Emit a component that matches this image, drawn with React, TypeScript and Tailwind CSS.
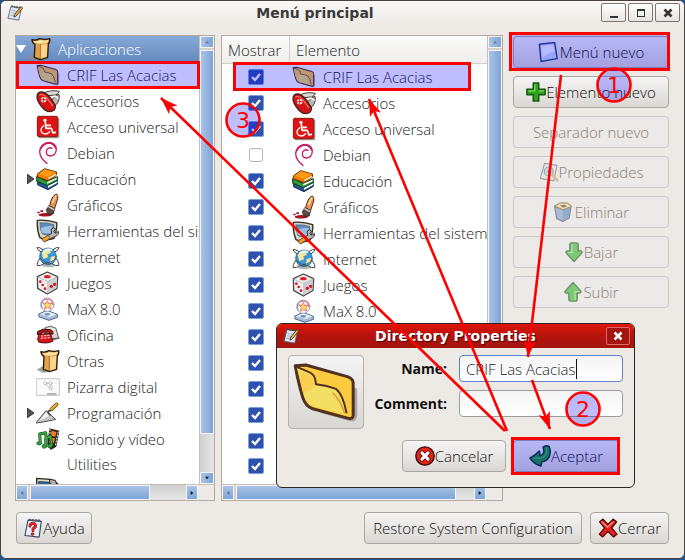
import type { ReactNode } from "react";

type IconProps = { size?: string; className?: string };

function Art({ size = "size-6", className = "", children }: IconProps & { children: ReactNode }) {
  return (
    <svg viewBox="0 0 72 72" aria-hidden="true" className={`shrink-0 ${size} ${className}`} strokeLinejoin="round" strokeLinecap="round">
      {children}
    </svg>
  );
}

const Bag = (p: IconProps) => (
  <Art {...p}>
    <path d="M2 62 L22 50 L26 66 L44 68 L20 71Z" fill="#8b8b8b" opacity=".8" />
    <path d="M15 8 Q26 12 38 5 Q54 9 68 5 Q70 16 64 20 L62 61 L40 68 L22 61 L24 22 Q14 16 15 8Z" fill="#e3a24d" stroke="#26170a" strokeWidth="4" />
    <path d="M41 24 L61 20 L59 59 L41 65Z" fill="#ffd48a" />
    <path d="M20 11 Q30 15 40 9 Q52 13 64 9 L62 16 L42 20 L24 18Z" fill="#ffe6ae" />
    <path d="M40 22 V66" stroke="#8a5418" strokeWidth="2" />
  </Art>
);

const Folder = ({ size = "size-6" }: IconProps) => (
  <svg viewBox="216 158 204 190" aria-hidden="true" className={`shrink-0 ${size}`} strokeLinejoin="round">
    <path d="M392 232 L412 242 V322 Q410 342 390 340 L300 314Z" fill="#8f8f8f" opacity=".7" />
    <path d="M225 172 L257 170 L385 206 Q400 212 400 226 V322 Q399 333 386 331 L278 302 Q256 294 248 268 Q236 230 225 172Z" fill="#fccb3f" stroke="#50301e" strokeWidth="9" />
    <path d="M231 180 L262 194 Q280 200 284 212 L287 228 Q320 234 346 242 Q372 262 382 320 L280 295 Q260 288 252 264Z" fill="#f2de62" />
    <path d="M236 186 L264 198 Q276 202 280 214 L284 232 Q270 250 248 252Z" fill="#fdc84a" opacity=".7" />
    <path d="M226 174 L264 190 Q282 197 285 212 L288 228 Q322 232 348 242 Q370 260 380 316" fill="none" stroke="#50301e" strokeWidth="6" />
    <path d="M338 254 Q362 276 374 316" fill="none" stroke="#e08f2c" strokeWidth="4" />
  </svg>
);

const Knife = (p: IconProps) => (
  <Art {...p}>
    <path d="M20 13 Q44 1 70 7 Q68 15 58 18 L34 20Z" fill="#d8d8d4" stroke="#4f3c30" strokeWidth="3" />
    <path d="M44 40 Q50 22 69 16 Q74 40 52 54Z" fill="#b9b6ae" stroke="#4f3c30" strokeWidth="3" />
    <path d="M50 24 Q60 18 66 28" fill="none" stroke="#fff" strokeWidth="4" />
    <path d="M3 22 Q5 8 18 9 Q32 12 44 28 L58 50 Q60 66 42 68 Q28 68 16 52 Q3 36 3 22Z" fill="#d41414" stroke="#43201c" strokeWidth="4" />
    <path d="M11 18 Q20 12 32 26 L50 50" fill="none" stroke="#ff6d61" strokeWidth="4" />
    <circle cx="23" cy="32" r="8" fill="#fff" />
    <path d="M23 26 V38 M17 32 H29" stroke="#d41414" strokeWidth="3" />
  </Art>
);

const Access = (p: IconProps) => (
  <Art {...p}>
    <rect x="8" y="8" width="62" height="62" rx="4" fill="#a09c98" />
    <rect x="4" y="4" width="61" height="61" rx="5" fill="#e01212" stroke="#8a1a14" strokeWidth="3" />
    <circle cx="27" cy="16" r="5" fill="#fff" />
    <path d="M28 22 L30 40 H46 L51 54 L58 52 M30 31 H43" fill="none" stroke="#fff" strokeWidth="5" />
    <path d="M23 32 Q10 42 18 53 Q29 62 41 50" fill="none" stroke="#fff" strokeWidth="4" />
  </Art>
);

const Debian = (p: IconProps) => (
  <Art {...p}>
    <path d="M33 67 Q11 52 11 31 Q15 8 38 5 Q60 6 61 25 Q60 44 43 45 Q27 43 32 27 Q38 17 48 22" fill="none" stroke="#c6205f" strokeWidth="4" />
    <path d="M14 22 Q22 6 40 5 Q54 7 59 20" fill="none" stroke="#c6205f" strokeWidth="6" />
  </Art>
);

const Books = (p: IconProps) => (
  <Art {...p}>
    <path d="M6 42 L36 56 L64 40 V52 L36 68 L6 54Z" fill="#2158a5" stroke="#16243c" strokeWidth="3" />
    <path d="M36 56 L64 42 V47 L36 63Z" fill="#fff" />
    <path d="M3 29 L34 43 L64 29 V40 L34 56 L3 43Z" fill="#279b34" stroke="#123a18" strokeWidth="3" />
    <path d="M34 44 L62 32 V37 L34 50Z" fill="#fff" />
    <path d="M5 20 L26 5 L62 15 L60 26 L36 41 L5 30Z" fill="#ef7d00" stroke="#633204" strokeWidth="3" />
    <path d="M37 32 L60 20 V25 L37 37Z" fill="#fff5dc" />
    <path d="M8 20 L27 7 L60 16 L36 29Z" fill="#ff9a14" />
  </Art>
);

const Brush = (p: IconProps) => (
  <Art {...p}>
    <path d="M4 56 h7 v5 h-7z M13 52 h8 v5 h-8z M8 64 Q26 58 38 61 L50 66 Q32 74 10 68Z" fill="#a31120" />
    <path d="M32 48 L44 38 L55 46 L52 62 Q42 68 35 61Z" fill="#5d4a42" stroke="#2b2320" strokeWidth="3" />
    <path d="M41 38 Q46 10 60 3 Q67 4 65 18 L56 46Z" fill="#e99350" stroke="#563117" strokeWidth="3" />
    <path d="M50 28 L59 9" stroke="#ffd4a0" strokeWidth="5" />
    <path d="M39 38 L57 47 L54 54 L36 44Z" fill="#cbc4bd" stroke="#463a34" strokeWidth="2" />
  </Art>
);

const Tools = (p: IconProps) => (
  <Art {...p}>
    <path d="M4 4 Q34 1 62 11 Q64 30 54 58 Q30 66 12 56 Q2 34 4 4Z" fill="#dcd6c0" stroke="#312b25" strokeWidth="4" />
    <path d="M12 12 Q34 9 54 17 Q54 32 46 48 Q28 50 18 44 Q11 30 12 12Z" fill="#5b8bb8" stroke="#46607c" strokeWidth="2" />
    <path d="M14 28 Q32 18 50 22 Q48 34 44 44 L18 42Z" fill="#9cc0e2" />
    <path d="M46 30 Q54 22 59 30 L53 38 L60 43 L67 37 Q69 49 58 52 L26 68 L18 60 L46 44Z" fill="#b9b8b6" stroke="#3b332e" strokeWidth="3" />
    <path d="M18 60 L36 49 L42 57 L25 69Z" fill="#ef9e31" stroke="#7a4810" strokeWidth="2" />
  </Art>
);

const Globe = (p: IconProps) => (
  <Art {...p}>
    <ellipse cx="38" cy="62" rx="20" ry="5" fill="#b4b4b4" />
    <circle cx="36" cy="34" r="25" fill="#3d97d6" stroke="#1d4a72" strokeWidth="2" />
    <path d="M17 24 Q28 8 42 13 L44 25 L34 27 L36 37 L22 42Z M44 36 L57 32 L55 45 L42 55Z" fill="#f7e6a0" />
    <path d="M24 18 Q34 9 46 15" fill="none" stroke="#e5f8ff" strokeWidth="6" />
    <path d="M14 20 Q2 12 3 8 Q8 5 20 13 M58 20 Q70 12 69 8 Q64 5 52 13 M12 40 Q1 54 4 62 Q12 64 24 56 M60 40 Q71 54 68 62 Q60 64 48 56" fill="none" stroke="#383e43" strokeWidth="3" />
    <path d="M12 40 Q26 54 48 56 M60 40 Q46 54 24 56" fill="none" stroke="#383e43" strokeWidth="2" />
  </Art>
);

const Die = (p: IconProps) => (
  <Art {...p}>
    <path d="M34 3 L65 17 L63 52 L34 69 L5 52 L4 17Z" fill="#f0eff0" stroke="#48474d" strokeWidth="4" />
    <path d="M36 31 L63 18 L61 51 L36 66Z" fill="#ceced3" />
    <path d="M5 18 L35 31 L64 18 M35 31 V67" fill="none" stroke="#aaa" strokeWidth="2" />
    <ellipse cx="34" cy="17" rx="10" ry="5" fill="#d81d25" />
    <g fill="#cf1820"><circle cx="13" cy="32" r="4" /><circle cx="20" cy="42" r="4" /><circle cx="27" cy="53" r="4" /><circle cx="46" cy="46" r="5" /><circle cx="56" cy="40" r="5" /></g>
  </Art>
);

const Max = (p: IconProps) => (
  <Art {...p}>
    <path d="M9 51 L33 40 L64 52 V61 L39 70 L10 60Z" fill="#a9bed5" stroke="#45658d" strokeWidth="3" />
    <path d="M12 51 L34 43 L61 52 L39 60Z" fill="#eaf2fb" />
    <circle cx="34" cy="23" r="20" fill="#faf7fb" stroke="#aaa6ba" strokeWidth="3" />
    <path d="M18 32 Q10 12 29 6" fill="none" stroke="#668bd8" strokeWidth="3" />
    <path d="M27 7 Q49 2 51 24" fill="none" stroke="#ec5a62" strokeWidth="3" />
    <path d="M20 17 L30 20 L34 11 L38 20 L48 18 L41 27 L45 36 L34 31 L25 37 L28 27Z" fill="#ffe066" stroke="#d94c44" strokeWidth="2" />
    <ellipse cx="34" cy="52" rx="9" ry="4" fill="#7594bb" />
  </Art>
);

const Phone = (p: IconProps) => (
  <Art {...p}>
    <path d="M28 14 L44 9 L60 16 L68 46 L46 52 L30 36Z" fill="#d7d5d1" stroke="#676560" strokeWidth="3" />
    <path d="M34 18 L55 19 M39 27 L58 29" stroke="#fff" strokeWidth="4" />
    <path d="M6 25 Q22 14 44 20 Q54 25 51 33 L42 33 L39 27 L17 28 L15 34 L5 35Z" fill="#b81416" stroke="#390c0b" strokeWidth="3" />
    <path d="M11 34 L43 31 L51 54 Q34 64 8 57 L5 48Z" fill="#d61518" stroke="#4b0d0b" strokeWidth="3" />
    <path d="M17 39 h4 M26 38 h4 M35 37 h4 M16 46 h4 M26 45 h4 M36 44 h4" stroke="#fff" strokeWidth="3" />
    <path d="M50 47 L70 45" stroke="#555" strokeWidth="3" />
  </Art>
);

const Board = (p: IconProps) => (
  <Art {...p}>
    <rect x="2" y="11" width="68" height="50" fill="#fafafa" stroke="#c6c6c6" strokeWidth="3" />
    <g fill="none" stroke="#aaa" strokeWidth="2"><circle cx="28" cy="25" r="5" /><circle cx="44" cy="25" r="5" /><circle cx="44" cy="40" r="5" /><path d="M33 25 H39 M44 30 V35 M31 29 L40 37" /></g>
    <path d="M34 57 H60" stroke="#777" strokeWidth="3" />
  </Art>
);

const Trowel = (p: IconProps) => (
  <Art {...p}>
    <path d="M2 63 L30 29 L59 55 Q30 62 2 66Z" fill="#cbc7ca" stroke="#4f4b50" strokeWidth="3" />
    <path d="M11 58 L31 34 L40 44Z" fill="#f6f5f6" />
    <path d="M42 42 Q30 31 42 29 L47 24" fill="none" stroke="#45413c" strokeWidth="5" />
    <path d="M46 25 L62 10" stroke="#704511" strokeWidth="11" />
    <path d="M46 25 L62 10" stroke="#f3b341" strokeWidth="6" />
  </Art>
);

const Media = (p: IconProps) => (
  <Art {...p}>
    <path d="M40 4 L70 11 L61 59 L44 69 L34 51Z" fill="#29231e" />
    <path d="M47 11 L61 15 L58 29 L44 26Z M43 32 L57 34 L54 47 L42 49Z" fill="#ff7d19" />
    <path d="M42 7 V57 M66 15 L58 58" stroke="#fff" strokeWidth="3" strokeDasharray="3 6" />
    <path d="M13 48 L11 21 L29 17 L31 39 M30 55 L29 35 L44 27 L47 54" fill="none" stroke="#174a18" strokeWidth="9" />
    <g fill="#29a338" stroke="#174a18" strokeWidth="2"><ellipse cx="9" cy="49" rx="7" ry="5" /><ellipse cx="25" cy="58" rx="7" ry="6" /><ellipse cx="42" cy="57" rx="7" ry="6" /></g>
    <path d="M13 48 L11 21 L29 17 L31 39 M30 55 L29 35 L44 27 L47 54" fill="none" stroke="#36b044" strokeWidth="5" />
  </Art>
);

const Admin = (p: IconProps) => (
  <Art {...p}>
    <path d="M2 4 L42 7 L65 20 L64 54 L10 60 L2 42Z" fill="#ddd8c7" stroke="#28251f" strokeWidth="4" />
    <path d="M9 14 L41 16 L39 42 L12 40Z" fill="#246cab" stroke="#203953" strokeWidth="3" />
    <path d="M42 7 L58 10 L63 24 L50 27 L42 17Z" fill="#b1ada3" stroke="#28251f" strokeWidth="3" />
  </Art>
);

const Notepad = ({ size = "size-4", className = "" }: IconProps) => (
  <Art size={size} className={className}>
    <path d="M19 8 L65 15 L53 68 L6 60Z" fill="#dce6f4" stroke="#59636f" strokeWidth="4" />
    <path d="M20 5 L61 12" stroke="#444" strokeWidth="6" strokeDasharray="4 8" />
    <path d="M22 25 L49 29 M19 35 L41 39 M17 46 L37 49" stroke="#8998b1" strokeWidth="3" />
    <path d="M64 8 L70 14 L40 51 L31 54 L34 44Z" fill="#f2ba43" stroke="#483519" strokeWidth="4" />
  </Art>
);

const Help = (p: IconProps) => (
  <Art {...p}>
    <path d="M18 8 L66 12 L58 69 L7 63Z" fill="#e6eefb" stroke="#33465d" strokeWidth="4" />
    <path d="M23 7 L62 10" stroke="#4c596b" strokeWidth="8" strokeDasharray="3 8" />
    <path d="M25 29 Q26 19 37 19 Q48 22 44 32 L36 39 L36 46" fill="none" stroke="#641415" strokeWidth="10" />
    <path d="M25 29 Q26 19 37 19 Q48 22 44 32 L36 39 L36 46" fill="none" stroke="#ef2020" strokeWidth="7" />
    <circle cx="34" cy="58" r="5" fill="#ef2020" stroke="#641415" strokeWidth="2" />
  </Art>
);

const Sheet = (p: IconProps) => (
  <Art {...p}>
    <path d="M5 8 L60 2 L69 60 L11 70Z" fill="#c9deff" stroke="#24456f" strokeWidth="5" />
    <path d="M12 14 L54 9 L59 34 Q32 38 16 58Z" fill="#f5faff" />
  </Art>
);

const Plus = (p: IconProps) => (
  <Art {...p}>
    <path d="M26 3 H46 V26 H69 V46 H46 V69 H26 V46 H3 V26 H26Z" fill="#2fa31e" stroke="#145511" strokeWidth="5" />
    <path d="M32 10 V32 H10 M50 32 H62" fill="none" stroke="#85db68" strokeWidth="4" />
  </Art>
);

const Props = (p: IconProps) => (
  <Art {...p}>
    <path d="M20 5 L65 12 L53 68 L5 59Z" fill="#e1e8ef" stroke="#4d5965" strokeWidth="4" />
    <circle cx="35" cy="34" r="16" fill="#b8cbdb" stroke="#555" strokeWidth="4" />
    <circle cx="35" cy="34" r="6" fill="#506c82" />
    <path d="M48 47 L65 65" stroke="#c39463" strokeWidth="11" />
  </Art>
);

const Bin = (p: IconProps) => (
  <Art {...p}>
    <path d="M6 16 L35 28 L65 16 L58 58 L35 70 L13 59Z" fill="#7a9fce" stroke="#3f4856" strokeWidth="4" />
    <path d="M35 29 L62 19 L56 57 L35 67Z" fill="#5683bf" />
    <path d="M5 14 L28 3 L53 4 L67 16 L36 28Z" fill="#f5da8f" stroke="#765f34" strokeWidth="4" />
    <path d="M25 13 L42 9 L50 16 L36 21Z" fill="#4e4837" />
  </Art>
);

const Down = ({ size, className = "" }: IconProps) => (
  <Art size={size} className={className}>
    <path d="M25 3 H45 Q51 3 51 9 V32 H60 Q68 34 63 41 L36 70 L9 41 Q4 34 12 32 H21 V9 Q21 3 25 3Z" fill="#38b22c" stroke="#1c5518" strokeWidth="5" />
    <path d="M29 10 V38 H17" fill="none" stroke="#9be58d" strokeWidth="4" />
  </Art>
);

const Cancel = (p: IconProps) => (
  <Art {...p}>
    <circle cx="36" cy="36" r="33" fill="#e32219" stroke="#3b0a08" strokeWidth="5" />
    <path d="M25 25 L47 47 M47 25 L25 47" stroke="#4c0c09" strokeWidth="17" />
    <path d="M25 25 L47 47 M47 25 L25 47" stroke="#fff" strokeWidth="11" />
  </Art>
);

const Accept = (p: IconProps) => (
  <Art {...p}>
    <path d="M46 7 Q58 0 66 5 Q73 22 66 40 Q58 53 42 55 L39 69 Q16 62 3 43 Q20 34 34 20 L36 35 Q54 32 46 7Z" fill="#1a9c33" stroke="#0c3a24" strokeWidth="5" />
    <path d="M57 10 Q62 38 38 43 L16 43" fill="none" stroke="#54b860" strokeWidth="4" />
  </Art>
);

const CloseX = (p: IconProps) => (
  <Art {...p}>
    <path d="M6 14 L18 4 L36 23 L54 4 L67 14 L49 36 L68 58 L56 68 L36 48 L17 68 L5 58 L24 36Z" fill="#ee1d1b" stroke="#590c09" strokeWidth="5" />
    <path d="M14 14 L34 33 L54 14" fill="none" stroke="#ff8b7e" strokeWidth="5" />
  </Art>
);

type Entry = { name: string; icon?: (p: IconProps) => ReactNode; expandable?: boolean; hidden?: boolean };

const entries: Entry[] = [
  { name: "CRIF Las Acacias", icon: Folder },
  { name: "Accesorios", icon: Knife },
  { name: "Acceso universal", icon: Access },
  { name: "Debian", icon: Debian, hidden: true },
  { name: "Educación", icon: Books, expandable: true },
  { name: "Gráficos", icon: Brush },
  { name: "Herramientas del sistema", icon: Tools },
  { name: "Internet", icon: Globe },
  { name: "Juegos", icon: Die },
  { name: "MaX 8.0", icon: Max },
  { name: "Oficina", icon: Phone },
  { name: "Otras", icon: Bag },
  { name: "Pizarra digital", icon: Board },
  { name: "Programación", icon: Trowel, expandable: true },
  { name: "Sonido y vídeo", icon: Media },
  { name: "Utilities" },
];

function rowHeight(e: Entry) {
  return e.icon ? "h-[26px]" : "h-6";
}

function Tip({ dir, faint }: { dir: "up" | "down" | "left" | "right"; faint?: boolean }) {
  const d = { up: "M0 5 L3 1 L6 5Z", down: "M0 1 L3 5 L6 1Z", left: "M5 0 L1 3 L5 6Z", right: "M1 0 L5 3 L1 6Z" }[dir];
  return (
    <svg viewBox="0 0 6 6" className="size-1" aria-hidden="true">
      <path d={d} fill={faint ? "#6f7478" : "#111"} />
    </svg>
  );
}

const blueV = "rounded-[1px] border border-[#f4f8fd] bg-linear-to-r from-[#a9c4e6] to-[#7fa4d6]";
const blueH = "rounded-[1px] border border-[#f4f8fd] bg-linear-to-b from-[#a9c4e6] to-[#7fa4d6]";

function VScroll({ thumb }: { thumb: string }) {
  return (
    <div className="flex w-[15px] shrink-0 flex-col border-l border-[#c9beb5] bg-[#dadada]">
      <button aria-label="Arriba" className={`flex h-3 items-center justify-center ${blueV}`}><Tip dir="up" faint /></button>
      <div className="h-0.5 bg-[#d8cfc8]" />
      <div className={`${thumb} ${blueV}`} />
      <div className="flex-1 bg-linear-to-r from-[#cfcfcf] to-[#e6e6e6]" />
      <button aria-label="Abajo" className={`flex h-3 items-center justify-center ${blueV}`}><Tip dir="down" /></button>
    </div>
  );
}

function HScroll({ thumb }: { thumb: string }) {
  return (
    <div className="flex h-4 shrink-0 border-t border-[#c9beb5] pr-4">
      <button aria-label="Izquierda" className={`flex w-3 items-center justify-center ${blueH}`}><Tip dir="left" faint /></button>
      <div className="w-0.5 bg-[#d8cfc8]" />
      <div className={`${thumb} ${blueH}`} />
      <div className="flex-1 bg-linear-to-b from-[#cfcfcf] to-[#e6e6e6]" />
      <button aria-label="Derecha" className={`flex w-3 items-center justify-center ${blueH}`}><Tip dir="right" /></button>
    </div>
  );
}

function Expander({ open }: { open?: boolean }) {
  return open ? (
    <svg viewBox="0 0 10 8" className="h-2 w-2.5" aria-hidden="true"><path d="M0 0 H10 L5 8Z" fill="#fff" /></svg>
  ) : (
    <svg viewBox="0 0 7 10" className="h-2.5 w-[7px]" aria-hidden="true"><path d="M0 0 L7 5 L0 10Z" fill="#555" stroke="#333" /></svg>
  );
}

function Tree() {
  return (
    <section className="flex w-[200px] shrink-0 flex-col border border-[#b5aaa0] bg-[#edeae6]">
      <div className="flex min-h-0 flex-1">
        <ul className="min-w-0 flex-1 overflow-hidden bg-white text-[#222]">
          <li className="flex h-[26px] items-center bg-linear-to-b from-[#86a9d8] to-[#6489bd] text-white">
            <span className="w-[11px]"><Expander open /></span>
            <Bag />
            <span className="ml-[7px]">Aplicaciones</span>
          </li>
          {entries.map((e) => (
            <li key={e.name} className={`flex items-center pl-[11px] whitespace-nowrap ${rowHeight(e)}`}>
              <span className="w-[9px] shrink-0">{e.expandable && <Expander />}</span>
              {e.icon ? <e.icon /> : <span className="w-6" />}
              <span className="ml-[7px]">{e.name}</span>
            </li>
          ))}
          <li className="flex h-[26px] items-center pl-5">
            <Admin />
            <span className="ml-[7px]">Administración</span>
          </li>
        </ul>
        <VScroll thumb="h-[384px]" />
      </div>
      <HScroll thumb="w-[120px]" />
    </section>
  );
}

function Tick({ name, on }: { name: string; on: boolean }) {
  return (
    <label className="grid size-4 place-items-center">
      <input
        type="checkbox"
        aria-label={`Mostrar ${name}`}
        defaultChecked={on}
        className="peer col-start-1 row-start-1 size-3.5 appearance-none rounded-[3px] border border-[#b4b4b4] bg-white checked:size-4 checked:rounded-[2px] checked:border checked:border-[#7ba2d8] checked:bg-[#2f50ad]"
      />
      <svg viewBox="0 0 16 16" className="pointer-events-none col-start-1 row-start-1 hidden size-4 peer-checked:block" aria-hidden="true">
        <path d="M4 8 L7 11 L12 5" fill="none" stroke="#fff" strokeWidth="2.4" />
      </svg>
    </label>
  );
}

function List() {
  return (
    <section className="flex min-w-0 flex-1 flex-col border border-[#b5aaa0] bg-[#edeae6]">
      <div className="flex min-h-0 flex-1">
        <div className="min-w-0 flex-1 overflow-hidden bg-white">
          <table className="w-full table-fixed border-separate border-spacing-0 text-[#222]">
            <thead>
              <tr className="h-7 bg-linear-to-b from-[#fafafa] to-[#efeeec] text-left text-[#222]">
                <th className="w-[68px] border-r border-b border-[#d5d0ca] p-0 pl-1.5 font-light">Mostrar</th>
                <th className="border-b border-[#d5d0ca] p-0 pl-1.5 font-light">Elemento</th>
              </tr>
            </thead>
            <tbody>
              {entries.map((e) => (
                <tr key={e.name} className={rowHeight(e)}>
                  <td className="p-0 pl-[26px]"><Tick name={e.name} on={!e.hidden} /></td>
                  <td className="p-0">
                    <div className={`flex items-center overflow-hidden pl-0.5 whitespace-nowrap ${rowHeight(e)}`}>
                      {e.icon ? <e.icon /> : <span className="w-6" />}
                      <span className="ml-[7px]">{e.name}</span>
                    </div>
                  </td>
                </tr>
              ))}
            </tbody>
          </table>
        </div>
        <VScroll thumb="h-[384px]" />
      </div>
      <HScroll thumb="w-[220px]" />
    </section>
  );
}

const btn = "flex h-8 items-center justify-center rounded-[4px] border";
const live = "border-[#a9a7a4] bg-linear-to-b from-[#f6f5f5] to-[#dad7d3] text-[#111]";
const off = "border-[#c9c8c5] bg-[#ebeae8] text-[#8c8074]";

function Mark({ x, y, n }: { x: number; y: number; n: number }) {
  return (
    <g>
      <circle cx={x} cy={y} r="16.5" fill="#0000ff" fillOpacity=".25" stroke="#f00" strokeWidth="2.6" />
      <text x={x} y={y + 8} textAnchor="middle" fontSize="22" fill="#f00" className="font-['DejaVu_Sans',sans-serif] font-normal">{n}</text>
    </g>
  );
}

function Annotations() {
  return (
    <svg className="pointer-events-none absolute top-0 left-0 h-[560px] w-[685px]" aria-hidden="true">
      <defs>
        <marker id="head" markerUnits="userSpaceOnUse" markerWidth="20" markerHeight="14" refX="18" refY="6" orient="auto">
          <path d="M18 6 L1 0 L5 6 L1 12Z" fill="#f00" />
        </marker>
      </defs>
      <g fill="#0000ff" fillOpacity=".25" stroke="#f00" strokeWidth="3">
        <rect x="17.5" y="62.5" width="181" height="25" />
        <rect x="234.5" y="63.5" width="235" height="26" />
        <rect x="510.5" y="33.5" width="158" height="36" />
        <rect x="512.5" y="438.5" width="106" height="35" />
      </g>
      <g stroke="#f00" strokeWidth="2.6">
        <path d="M561 75 L528 357" markerEnd="url(#head)" />
        <path d="M532 380 L550 429" markerEnd="url(#head)" />
        <path d="M505 431 L161 98" markerEnd="url(#head)" />
        <path d="M507 431 L369 99" markerEnd="url(#head)" />
      </g>
      <Mark x={614} y={85} n={1} />
      <Mark x={583} y={409} n={2} />
      <Mark x={243} y={120} n={3} />
    </svg>
  );
}

const field = "h-[27px] w-full rounded-[4px] border bg-linear-to-b from-[#f4f4f4] to-white px-1.5 text-[#222] outline-none";

function Dialog() {
  return (
    <section role="dialog" aria-labelledby="dialog-title" className="absolute top-[323px] left-[276px] w-[359px] overflow-hidden rounded-[6px] border border-[#2c2624] bg-[#edeae6]">
      <header className="flex h-6 items-center bg-linear-to-b from-[#df1508] via-[#b5130d] to-[#a4140e] pr-1 pl-1.5">
        <Notepad />
        <h2 id="dialog-title" className="flex-1 pl-1.5 text-center font-['DejaVu_Sans',sans-serif] text-sm font-bold text-white [text-shadow:1px_1px_1px_#400]">Directory Properties</h2>
        <button aria-label="Cerrar diálogo" className="flex h-[18px] w-6 items-center justify-center rounded-[2px] border border-[#e06a60] bg-[#a3150f]">
          <svg viewBox="0 0 10 10" className="size-2.5" aria-hidden="true"><path d="M1.5 1.5 L8.5 8.5 M8.5 1.5 L1.5 8.5" stroke="#fff" strokeWidth="2.6" /></svg>
        </button>
      </header>
      <form className="px-[11px] pt-[7px] pb-[15px]" onSubmit={(e) => e.preventDefault()}>
        <div className="flex">
          <button type="button" aria-label="Icono" className="flex h-[74px] w-[76px] shrink-0 items-center justify-center rounded-[4px] border border-[#b4b2b0] bg-linear-to-b from-[#f4f4f4] to-[#d9d6d3]">
            <Folder size="w-[68px] h-[63px]" />
          </button>
          <div className="grid flex-1 grid-cols-[83px_1fr] content-start gap-x-3 gap-y-2">
            <label htmlFor="name" className="self-center text-right text-sm font-bold text-[#111]">Name:</label>
            <div className={`flex items-center border-[#5f80cc] ${field}`}>
              <input id="name" defaultValue="CRIF Las Acacias" className="w-[111px] border-r border-[#111] bg-transparent outline-none" />
            </div>
            <label htmlFor="comment" className="self-center text-right text-sm font-bold text-[#111]">Comment:</label>
            <input id="comment" className={`border-[#9d9d9b] ${field}`} />
          </div>
        </div>
        <div className="mt-[11px] flex justify-end gap-[7px] pr-1">
          <button type="button" className={`w-[104px] ${btn} ${live}`}><Cancel size="size-5" />Cancelar</button>
          <button type="submit" className={`w-[106px] ${btn} ${live}`}><Accept size="size-[22px]" />Aceptar</button>
        </div>
      </form>
    </section>
  );
}

const winBtn = "flex h-[19px] w-[25px] items-center justify-center rounded-[2px] border border-[#7c7773] bg-linear-to-b from-white to-[#e6e3df]";

export default function App() {
  return (
    <div className="relative h-screen bg-[#1b5792] pb-px font-['Open_Sans','Noto_Sans',sans-serif] text-[15px] leading-5 font-light">
      <main className="flex h-full flex-col rounded-[6px] border border-[#4b4341] bg-[#edeae6]">
        <header className="flex h-[34px] shrink-0 items-start rounded-t-[5px] bg-linear-to-b from-[#faf7f5] to-[#edeae6] to-70% pt-0.5 pr-1 pl-1.5">
          <Notepad className="mt-0.5" />
          <h1 className="flex-1 pl-1.5 text-center font-['DejaVu_Sans',sans-serif] text-sm font-bold text-[#3a3a3a]">Menú principal</h1>
          <div className="flex gap-0.5">
            <button aria-label="Minimizar" className={winBtn}><span className="mt-2 h-0.5 w-2 bg-[#333]" /></button>
            <button aria-label="Maximizar" className={winBtn}><span className="size-2 border border-t-2 border-[#333]" /></button>
            <button aria-label="Cerrar ventana" className={winBtn}>
              <svg viewBox="0 0 10 10" className="size-2.5" aria-hidden="true"><path d="M1.5 1.5 L8.5 8.5 M8.5 1.5 L1.5 8.5" stroke="#333" strokeWidth="2.6" /></svg>
            </button>
          </div>
        </header>
        <div className="flex min-h-0 flex-1 gap-1.5 pr-[15px] pl-3.5">
          <Tree />
          <List />
          <nav className="ml-1 flex w-[156px] shrink-0 flex-col gap-2 pt-px">
            <button className={`${btn} ${live}`}><Sheet size="size-5" /><span className="ml-0.5">Menú nuevo</span></button>
            <button className={`${btn} ${live}`}><Plus size="size-5" />Elemento nuevo</button>
            <button disabled className={`${btn} ${off}`}>Separador nuevo</button>
            <button disabled className={`${btn} ${off}`}><Props size="size-5" className="opacity-50" />Propiedades</button>
            <button disabled className={`${btn} ${off}`}><Bin size="size-5" className="opacity-60" /><span className="ml-0.5">Eliminar</span></button>
            <button disabled className={`${btn} ${off}`}><Down size="size-5" className="opacity-60" />Bajar</button>
            <button disabled className={`${btn} ${off}`}><Down size="size-5" className="rotate-180 opacity-60" />Subir</button>
          </nav>
        </div>
        <footer className="flex shrink-0 items-center gap-2 pt-[11px] pr-[15px] pb-3.5 pl-[15px]">
          <button className={`mr-auto w-[76px] ${btn} ${live}`}><Help size="size-5" />Ayuda</button>
          <button className={`w-[218px] ${btn} ${live}`}>Restore System Configuration</button>
          <button className={`w-[79px] ${btn} ${live}`}><CloseX size="size-5" />Cerrar</button>
        </footer>
      </main>
      <Dialog />
      <Annotations />
    </div>
  );
}
